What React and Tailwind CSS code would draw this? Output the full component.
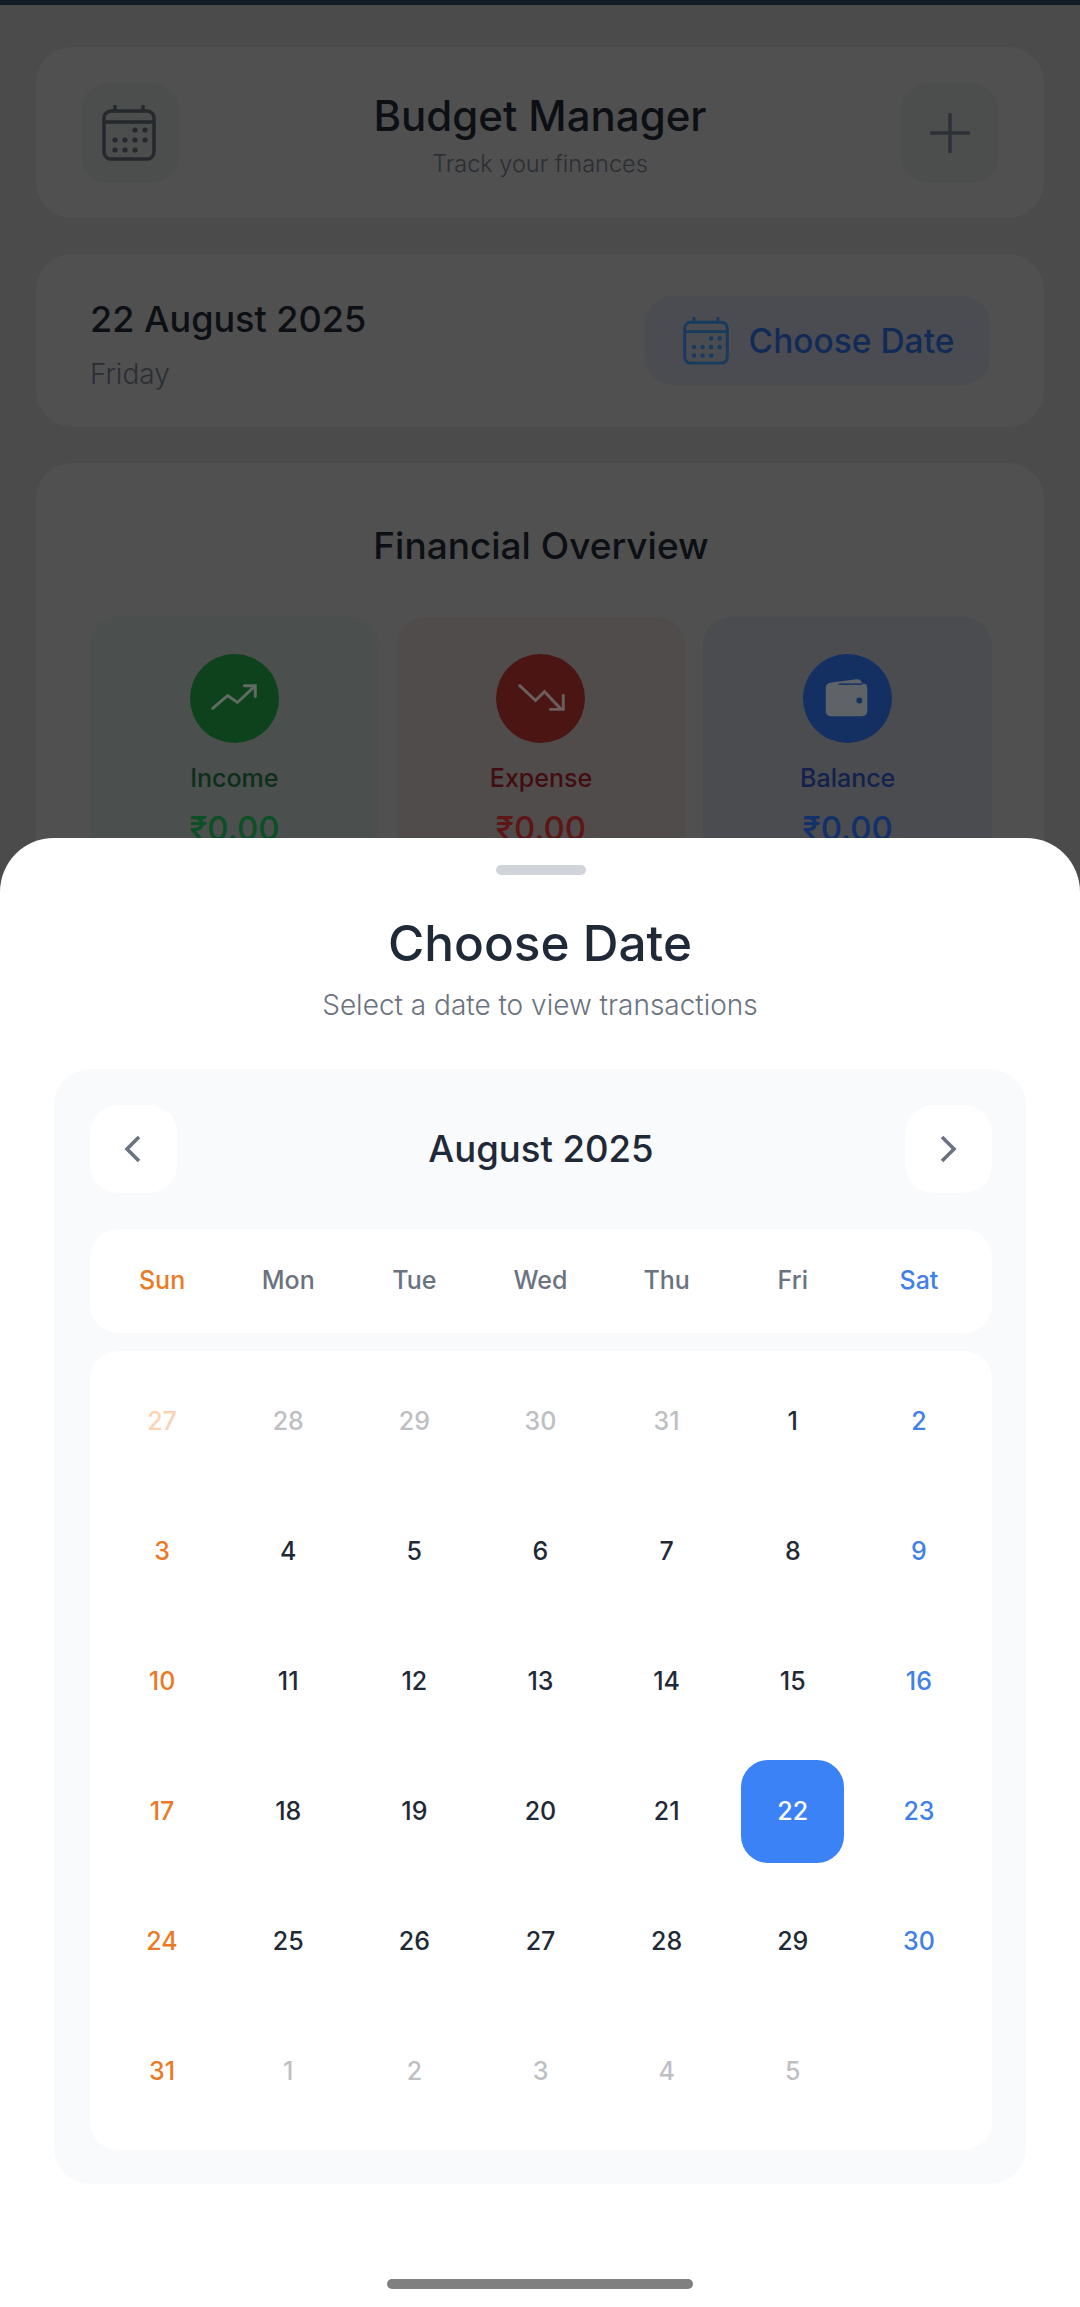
import React from "react";

const F = { fontFamily: '"Inter", "Noto Sans", sans-serif' };

function CalIcon({ className, color }) {
  return (
    <svg viewBox="0 0 54 56" className={className} fill="none" stroke={color} strokeWidth="3.4">
      <rect x="2" y="6" width="50" height="48" rx="7" />
      <path d="M2 17H52" />
      <path d="M13 1V6M41 1V6" strokeLinecap="round" />
      {[
        [33, 25], [43, 25],
        [13, 35], [23, 35], [33, 35], [43, 35],
        [13, 45], [23, 45], [33, 45],
      ].map(([x, y]) => (
        <circle key={x + "-" + y} cx={x} cy={y} r="2.6" fill={color} stroke="none" />
      ))}
    </svg>
  );
}

function Stat({ bg, circle, label, labelColor, amountColor, icon }) {
  return (
    <div className={`rounded-[28px] h-[260px] flex flex-col items-center pt-[37px] ${bg}`}>
      <div className={`w-[89px] h-[89px] rounded-full flex items-center justify-center ${circle}`}>{icon}</div>
      <div className={`mt-[17px] text-[25px] leading-[36px] font-medium ${labelColor}`}>{label}</div>
      <div className={`mt-[10px] text-[33px] leading-[44px] font-medium ${amountColor}`}>₹0.00</div>
    </div>
  );
}

const weeks = [
  [["27", "mo"], ["28", "m"], ["29", "m"], ["30", "m"], ["31", "m"], ["1", "n"], ["2", "b"]],
  [["3", "o"], ["4", "n"], ["5", "n"], ["6", "n"], ["7", "n"], ["8", "n"], ["9", "b"]],
  [["10", "o"], ["11", "n"], ["12", "n"], ["13", "n"], ["14", "n"], ["15", "n"], ["16", "b"]],
  [["17", "o"], ["18", "n"], ["19", "n"], ["20", "n"], ["21", "n"], ["22", "s"], ["23", "b"]],
  [["24", "o"], ["25", "n"], ["26", "n"], ["27", "n"], ["28", "n"], ["29", "n"], ["30", "b"]],
  [["31", "o"], ["1", "m"], ["2", "m"], ["3", "m"], ["4", "m"], ["5", "m"], ["", "n"]],
];

const dayClass = {
  n: "text-[#1f2937]",
  o: "text-[#ea7a25]",
  b: "text-[#4080e8]",
  m: "text-[#bdbfc3]",
  mo: "text-[#fbd3b4]",
  s: "text-white bg-[#3b82f6] rounded-[27px]",
};

export default function App() {
  return (
    <div className="relative w-[1080px] h-[2307px] overflow-hidden bg-[#4b4b4b]" style={F}>
      <div className="h-[5px] bg-[#121a26]" />
      <div className="px-[36px] pt-[42px] flex flex-col gap-[36px]">
        <div className="h-[171px] rounded-[36px] bg-[#505050] flex items-center justify-between px-[45px]">
          <div className="w-[98px] h-[100px] rounded-[28px] bg-[#4c4d4d] flex items-center justify-center">
            <CalIcon className="w-[54px] h-[56px] -ml-[2px]" color="#25282c" />
          </div>
          <div className="flex flex-col items-center pt-[6px]">
            <div className="text-[42px] leading-[50px] font-medium text-[#0c0f13]">Budget Manager</div>
            <div className="mt-[6px] text-[23.5px] leading-[34px] text-[#2b2e33] font-light">Track your finances</div>
          </div>
          <div className="w-[98px] h-[100px] rounded-[28px] bg-[#4c4d4d] flex items-center justify-center">
            <svg viewBox="0 0 40 40" className="w-[40px] h-[40px]" stroke="#2d3036" strokeWidth="3.4" strokeLinecap="round">
              <path d="M20 1V39M1 20H39" />
            </svg>
          </div>
        </div>

        <div className="h-[173px] rounded-[36px] bg-[#505050] flex items-center justify-between pl-[54px] pr-[54px]">
          <div className="flex flex-col pt-[6px]">
            <div className="text-[36px] leading-[46px] font-medium text-[#0c0f13]">22 August 2025</div>
            <div className="mt-[14px] text-[28px] leading-[36px] font-light text-[#2b2e33]">Friday</div>
          </div>
          <div className="w-[345px] h-[89px] rounded-[28px] bg-[#4a4c51] flex items-center justify-center gap-[20px]">
            <CalIcon className="w-[46px] h-[48px] ml-[2px]" color="#173a5e" />
            <span className="pt-[2px] text-[33.5px] font-medium text-[#122a58]">Choose Date</span>
          </div>
        </div>

        <div className="h-[600px] rounded-[36px] bg-[#505050] pt-[59px] pl-[54px] pr-[52px]">
          <div className="text-center text-[37px] leading-[48px] font-medium text-[#0c0f13]">Financial Overview</div>
          <div className="mt-[47px] grid grid-cols-3 gap-[18px]">
            <Stat bg="bg-[#4b4f4d]" circle="bg-[#0e421c]" label="Income" labelColor="text-[#0d2e1b]" amountColor="text-[#0c4f24]"
              icon={
                <svg viewBox="0 0 90 90" className="w-[89px] h-[89px]" fill="none" stroke="#606b63" strokeWidth="3" strokeLinecap="round">
                  <path d="M23 55L38 42L48 49L65 33" />
                  <path d="M55 32H66V43" />
                </svg>
              } />
            <Stat bg="bg-[#504c4b]" circle="bg-[#4a1513]" label="Expense" labelColor="text-[#410d0f]" amountColor="text-[#5e1515]"
              icon={
                <svg viewBox="0 0 90 90" className="w-[89px] h-[89px]" fill="none" stroke="#6b5f5e" strokeWidth="3" strokeLinecap="round">
                  <path d="M24 32L40 47L49 38L65 55" />
                  <path d="M68 42V56H55" />
                </svg>
              } />
            <Stat bg="bg-[#4b4c50]" circle="bg-[#143063]" label="Balance" labelColor="text-[#13214d]" amountColor="text-[#12306a]"
              icon={
                <svg viewBox="0 0 90 90" className="w-[89px] h-[89px]">
                  <path fill="#5f6368" d="M23 34C23 31 25 30 27 29L54 25.5C57 25 59 27 60 30H62C64 30 65 32 65 34V58C65 61 63 63 60 63H28C25 63 23 61 23 58Z" />
                  <path d="M36 30.5H60" stroke="#143063" strokeWidth="1.5" />
                  <circle cx="57" cy="47" r="3" fill="#143063" />
                </svg>
              } />
          </div>
        </div>
      </div>

      <div className="absolute left-0 right-0 top-[838px] bottom-0 bg-white rounded-t-[54px] flex flex-col items-center">
        <div className="mt-[27px] ml-[2px] w-[90px] h-[10px] rounded-full bg-[#d1d5db]" />
        <div className="mt-[36px] text-[49.5px] leading-[64px] font-medium text-[#1f2937]">Choose Date</div>
        <div className="mt-[11px] text-[28px] leading-[38px] font-light text-[#6b7280]">Select a date to view transactions</div>

        <div className="mt-[45px] w-[972px] h-[1115px] rounded-[36px] bg-[#f9fafb] pl-[36px] pr-[34px] pt-[36px]">
          <div className="flex items-center justify-between">
            <div className="w-[87px] h-[88px] rounded-[28px] bg-white flex items-center justify-center">
              <svg viewBox="0 0 20 28" className="w-[20px] h-[28px] -ml-[2px]" fill="none" stroke="#6b7280" strokeWidth="3.6">
                <path d="M16 2L4 14L16 26" />
              </svg>
            </div>
            <div className="text-[36.5px] font-medium text-[#1f2937]">August 2025</div>
            <div className="w-[87px] h-[88px] rounded-[28px] bg-white flex items-center justify-center">
              <svg viewBox="0 0 20 28" className="w-[20px] h-[28px]" fill="none" stroke="#6b7280" strokeWidth="3.6">
                <path d="M4 2L16 14L4 26" />
              </svg>
            </div>
          </div>

          <div className="mt-[36px] h-[104px] rounded-[28px] bg-white grid grid-cols-7 pl-[9px] pr-[10px] items-center text-center text-[25px] font-medium text-[#6b7280]">
            <div className="text-[#ea7a25]">Sun</div>
            <div>Mon</div>
            <div>Tue</div>
            <div>Wed</div>
            <div>Thu</div>
            <div>Fri</div>
            <div className="text-[#4080e8]">Sat</div>
          </div>

          <div className="mt-[18px] h-[799px] rounded-[28px] bg-white pl-[9px] pr-[10px] pt-[5px] grid grid-cols-7 grid-rows-[repeat(6,130px)] content-start">
            {weeks.flat().map(([d, k], i) => (
              <div key={i} className="flex items-center justify-center">
                <div className={`w-[103px] h-[103px] pt-[2px] flex items-center justify-center text-[25px] font-medium ${dayClass[k]}`}>{d}</div>
              </div>
            ))}
          </div>
        </div>

        <div className="absolute left-[387px] top-[1441px] w-[306px] h-[10px] rounded-[5px] bg-[#808080]" />
      </div>
    </div>
  );
}
